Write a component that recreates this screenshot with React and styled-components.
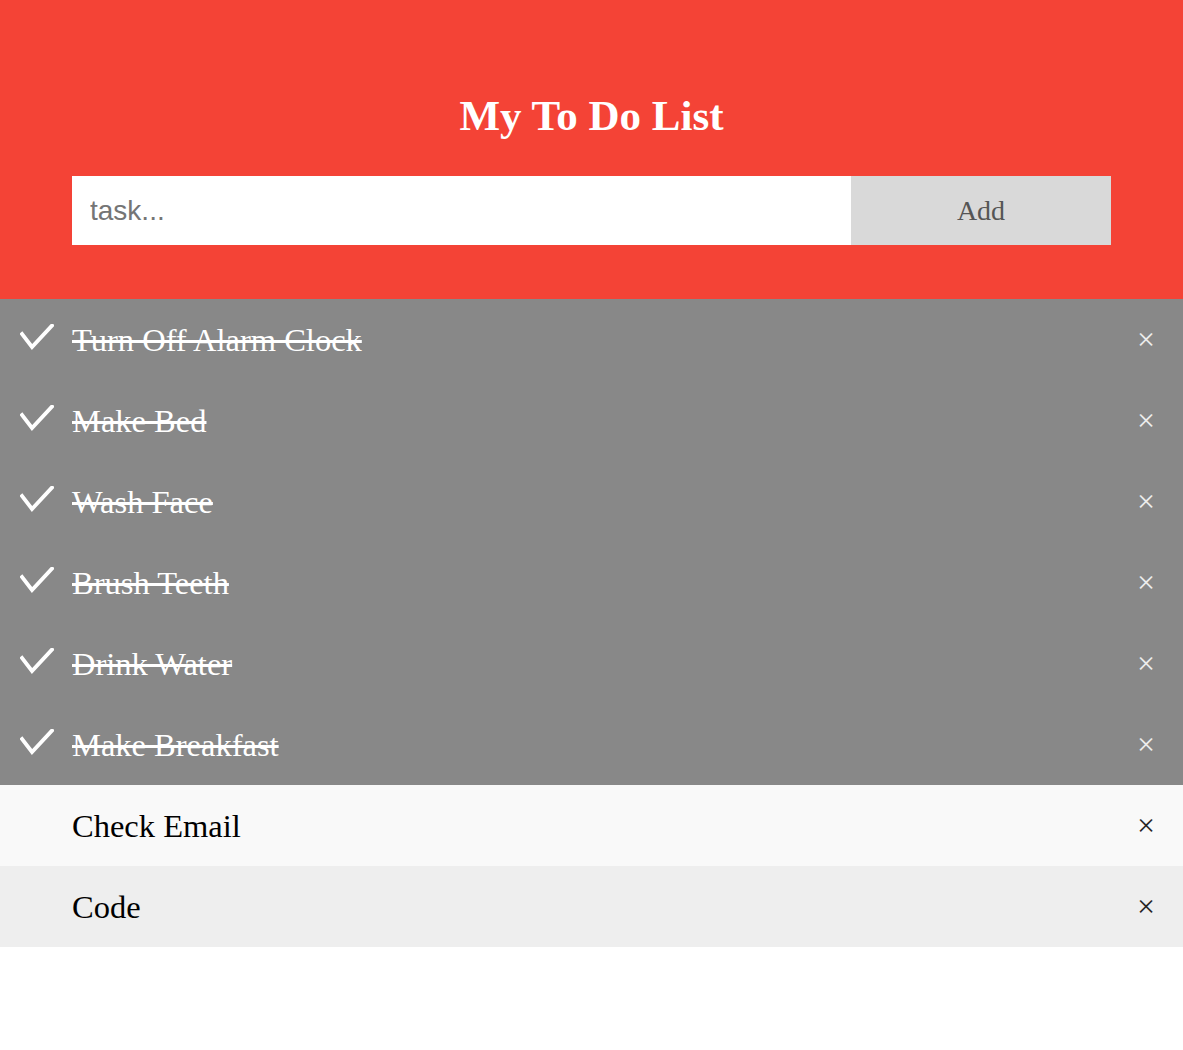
import React, { useState } from "react";
import styled, { createGlobalStyle } from "styled-components";

const GlobalStyle = createGlobalStyle`
  body {
    margin: 0;
    background: #fff;
    font-family: "Liberation Serif", "Times New Roman", serif;
  }
`;

const initialTasks = [
  { id: 1, text: "Turn Off Alarm Clock", done: true },
  { id: 2, text: "Make Bed", done: true },
  { id: 3, text: "Wash Face", done: true },
  { id: 4, text: "Brush Teeth", done: true },
  { id: 5, text: "Drink Water", done: true },
  { id: 6, text: "Make Breakfast", done: true },
  { id: 7, text: "Check Email", done: false },
  { id: 8, text: "Code", done: false },
];

const CheckIcon = () => (
  <svg width="34" height="26" viewBox="0 0 34 26" fill="none">
    <polyline points="2,10 12,23 32,1.5" stroke="#fff" strokeWidth="3.8" strokeLinecap="square" />
  </svg>
);

const App = () => {
  const [tasks, setTasks] = useState(initialTasks);
  const [value, setValue] = useState("");

  const addTask = () => {
    if (!value.trim()) return;
    setTasks([...tasks, { id: Date.now(), text: value, done: false }]);
    setValue("");
  };

  const toggle = (id) =>
    setTasks(tasks.map((t) => (t.id === id ? { ...t, done: !t.done } : t)));

  const remove = (id) => setTasks(tasks.filter((t) => t.id !== id));

  return (
    <>
      <GlobalStyle />
      <Header>
        <Title>My To Do List</Title>
        <InputRow>
          <TaskInput
            placeholder="task..."
            value={value}
            onChange={(e) => setValue(e.target.value)}
          />
          <AddButton onClick={addTask}>Add</AddButton>
        </InputRow>
      </Header>
      <List>
        {tasks.map((t, i) => (
          <Row key={t.id} $done={t.done} $odd={i % 2 === 0} onClick={() => toggle(t.id)}>
            <CheckSlot>{t.done && <CheckIcon />}</CheckSlot>
            <TaskText $done={t.done}>{t.text}</TaskText>
            <Close
              onClick={(e) => {
                e.stopPropagation();
                remove(t.id);
              }}
            >
              {"\u00D7"}
            </Close>
          </Row>
        ))}
      </List>
    </>
  );
};

const Header = styled.div`
  background-color: #f44336;
  padding: 52px 72px 54px;
  color: #fff;
  text-align: center;
`;

const Title = styled.h2`
  margin: 40px 0 36px;
  font-size: 43px;
  line-height: 48px;
  font-weight: bold;
`;

const InputRow = styled.div`
  display: flex;
  height: 69px;
`;

const TaskInput = styled.input`
  flex: 1;
  min-width: 0;
  border: none;
  border-radius: 0;
  margin: 0;
  padding: 0 18px;
  font-family: "Liberation Sans", Arial, sans-serif;
  font-size: 28px;
  color: #333;
  outline: none;
  &::placeholder { color: #757575; }
`;

const AddButton = styled.button`
  width: 260px;
  border: none;
  border-radius: 0;
  background: #d9d9d9;
  color: #555;
  font-family: "Liberation Serif", "Times New Roman", serif;
  font-size: 28px;
  cursor: pointer;
  &:hover { background: #bbb; }
`;

const List = styled.ul`
  margin: 0;
  padding: 0;
  list-style: none;
`;

const Row = styled.li`
  display: flex;
  align-items: center;
  height: 81px;
  padding-left: 20px;
  background: ${(p) => (p.$done ? "#888" : p.$odd ? "#f9f9f9" : "#eee")};
  color: ${(p) => (p.$done ? "#fff" : "#000")};
  font-size: 32.5px;
  cursor: pointer;
  user-select: none;
`;

const CheckSlot = styled.span`
  width: 52px;
  display: flex;
  align-items: center;
  padding-bottom: 6px;
`;

const TaskText = styled.span`
  flex: 1;
  line-height: 39px;
  padding-top: 1px;
  text-decoration: ${(p) => (p.$done ? "line-through" : "none")};
`;

const Close = styled.span`
  padding: 0 28px;
  font-size: 32px;
  line-height: 39px;
  opacity: 0.85;
  &:hover { background: #f44336; color: #fff; }
`;

export default App;
